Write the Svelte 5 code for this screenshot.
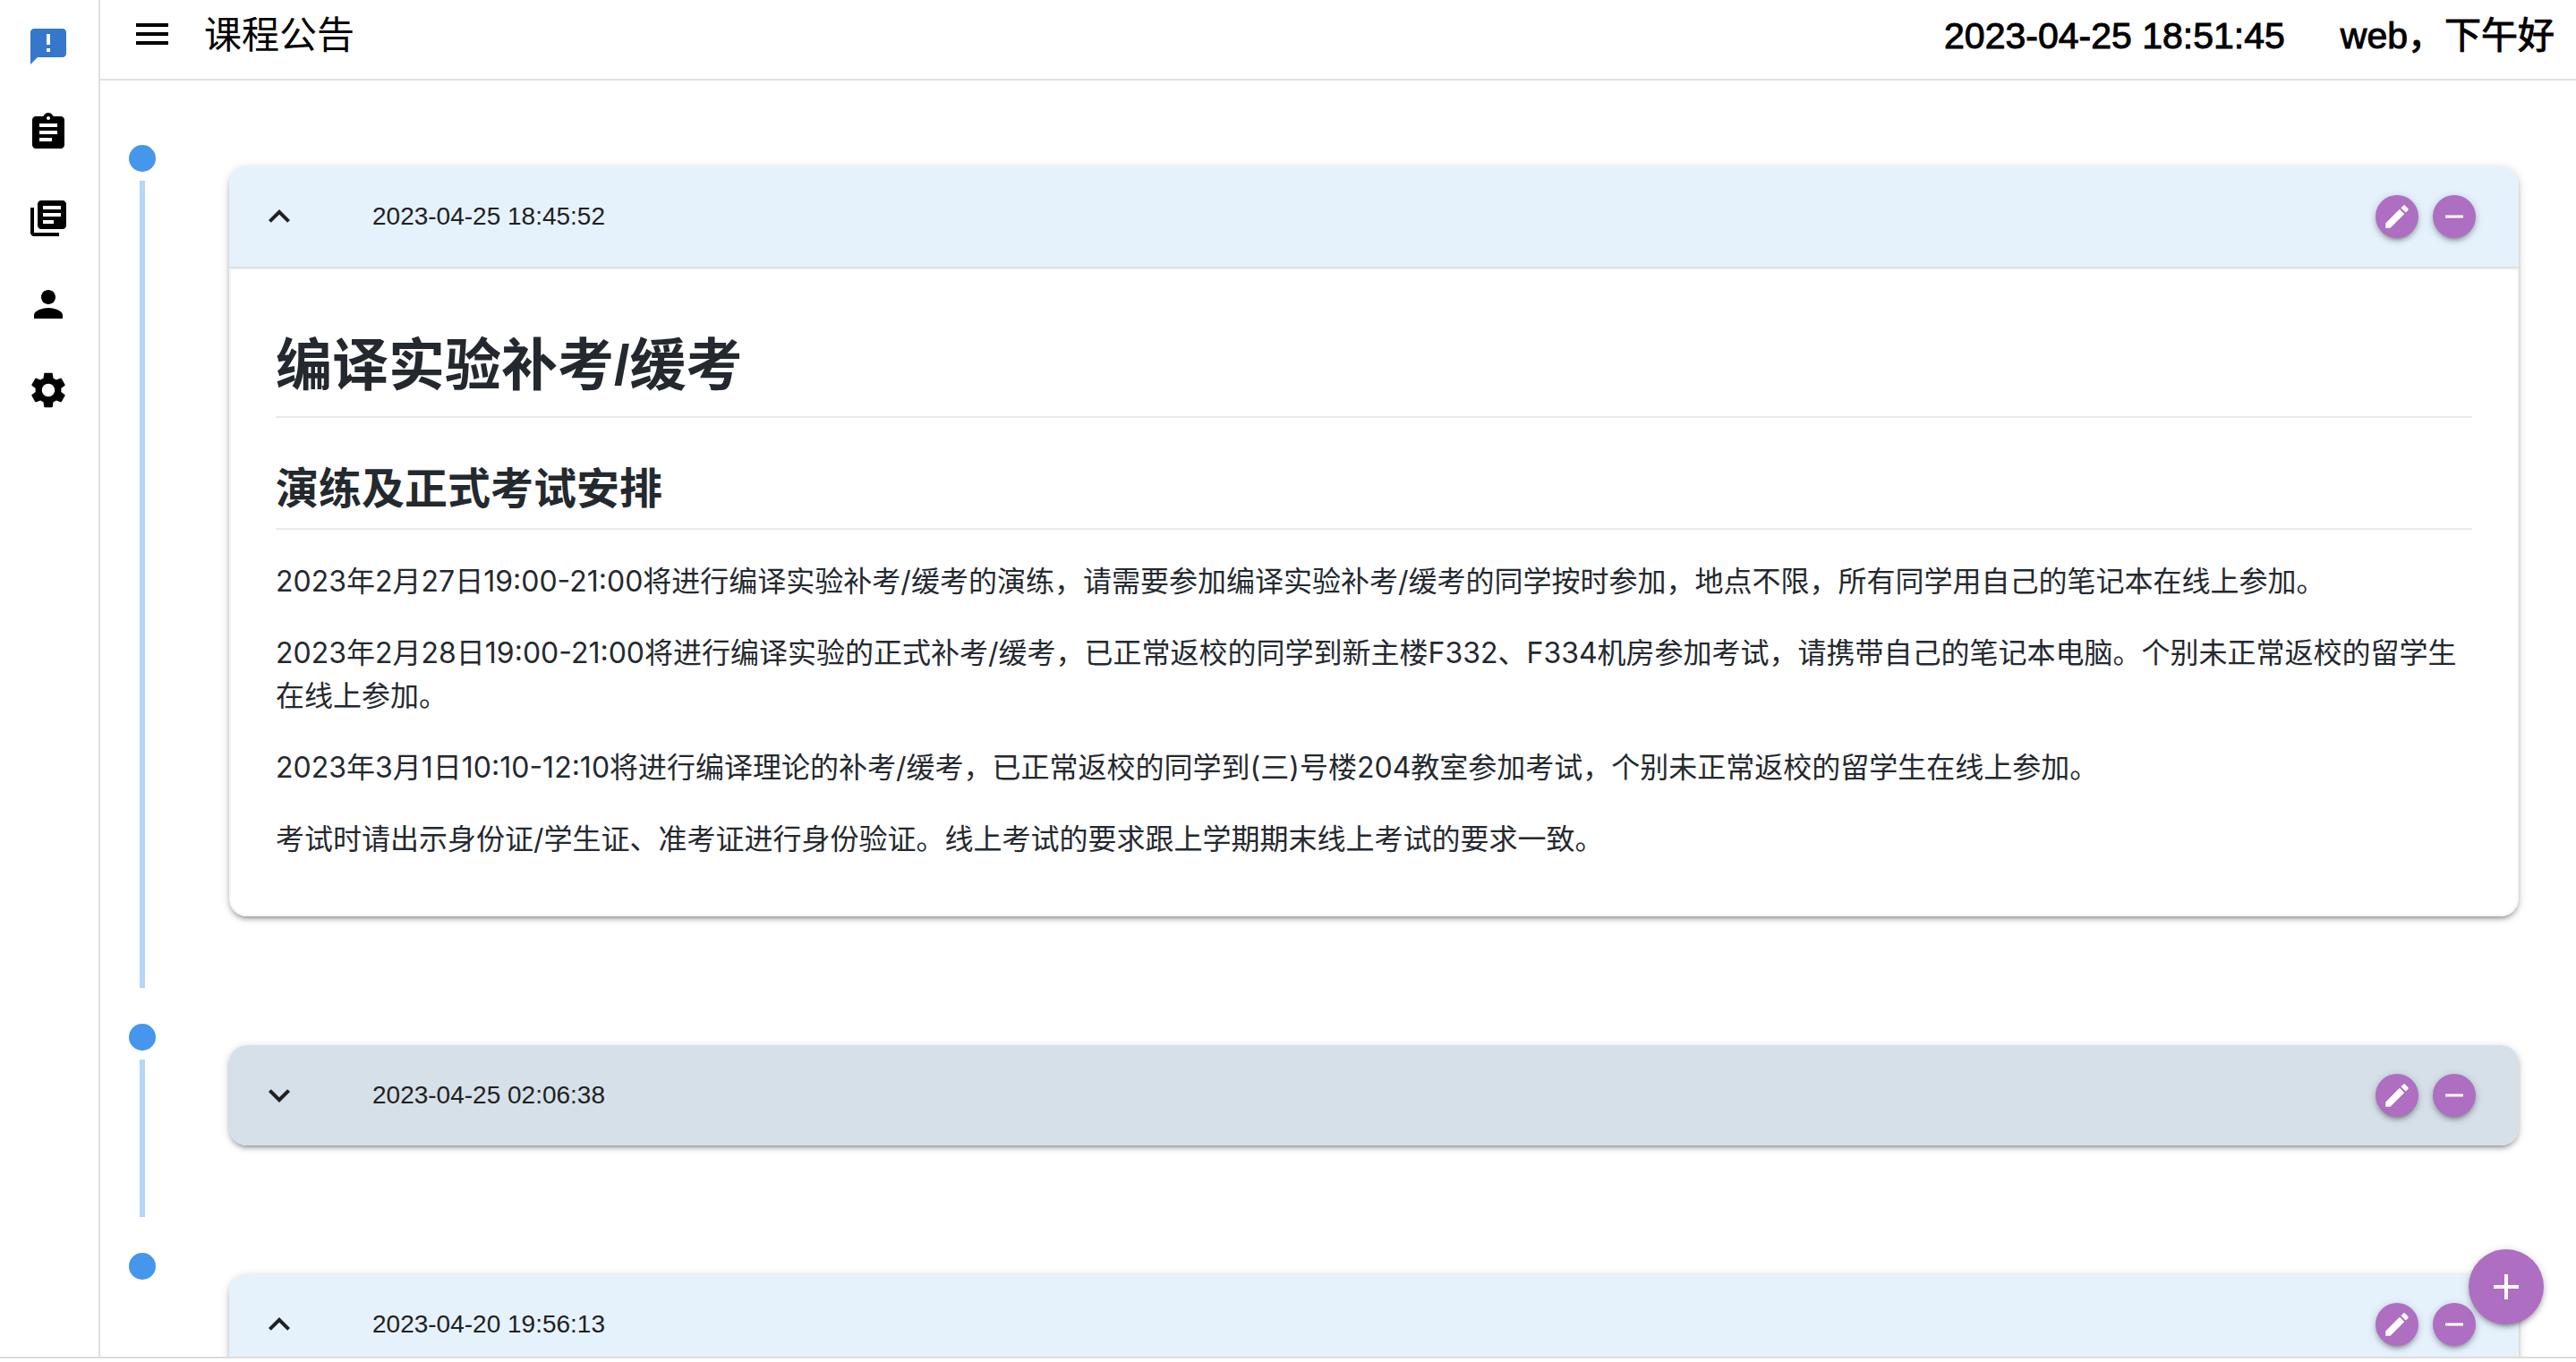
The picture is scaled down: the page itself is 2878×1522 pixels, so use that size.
<script lang="ts">
    type Notice = {
        time: string;
        open: boolean;
        hovered?: boolean;
        title?: string;
        subtitle?: string;
        paragraphs?: string[];
    };

    // Material icon paths, 24x24
    const icons = {
        announcement: 'M20 2H4c-1.1 0-1.99.9-1.99 2L2 22l4-4h14c1.1 0 2-.9 2-2V4c0-1.1-.9-2-2-2zm-7 9h-2V5h2v6zm0 4h-2v-2h2v2z',
        assignment: 'M19 3h-4.18C14.4 1.84 13.3 1 12 1c-1.3 0-2.4.84-2.82 2H5c-1.1 0-2 .9-2 2v14c0 1.1.9 2 2 2h14c1.1 0 2-.9 2-2V5c0-1.1-.9-2-2-2zm-7 0c.55 0 1 .45 1 1s-.45 1-1 1-1-.45-1-1 .45-1 1-1zm2 14H7v-2h7v2zm3-4H7v-2h10v2zm0-4H7V7h10v2z',
        library: 'M4 6H2v14c0 1.1.9 2 2 2h14v-2H4V6zm16-4H8c-1.1 0-2 .9-2 2v12c0 1.1.9 2 2 2h12c1.1 0 2-.9 2-2V4c0-1.1-.9-2-2-2zm-1 9H9V9h10v2zm-4 4H9v-2h6v2zm4-8H9V5h10v2z',
        person: 'M12 12c2.21 0 4-1.79 4-4s-1.79-4-4-4-4 1.79-4 4 1.79 4 4 4zm0 2c-2.67 0-8 1.34-8 4v2h16v-2c0-2.66-5.33-4-8-4z',
        settings: 'M19.14 12.94c.04-.3.06-.61.06-.94 0-.32-.02-.64-.07-.94l2.03-1.58c.18-.14.23-.41.12-.61l-1.92-3.32c-.12-.22-.37-.29-.59-.22l-2.39.96c-.5-.38-1.03-.7-1.62-.94l-.36-2.54c-.04-.24-.24-.41-.48-.41h-3.84c-.24 0-.43.17-.47.41l-.36 2.54c-.59.24-1.13.57-1.62.94l-2.39-.96c-.22-.08-.47 0-.59.22L2.74 8.87c-.12.21-.08.47.12.61l2.03 1.58c-.05.3-.09.63-.09.94s.02.64.07.94l-2.03 1.58c-.18.14-.23.41-.12.61l1.92 3.32c.12.22.37.29.59.22l2.39-.96c.5.38 1.03.7 1.62.94l.36 2.54c.05.24.24.41.48.41h3.84c.24 0 .44-.17.47-.41l.36-2.54c.59-.24 1.13-.56 1.62-.94l2.39.96c.22.08.47 0 .59-.22l1.92-3.32c.12-.22.07-.47-.12-.61l-2.01-1.58zM12 15.6c-1.98 0-3.6-1.62-3.6-3.6s1.62-3.6 3.6-3.6 3.6 1.62 3.6 3.6-1.62 3.6-3.6 3.6z',
        menu: 'M3 18h18v-2H3v2zm0-5h18v-2H3v2zm0-7v2h18V6H3z',
        up: 'M7.41 15.41L12 10.83l4.59 4.58L18 14l-6-6-6 6z',
        down: 'M7.41 8.59L12 13.17l4.59-4.58L18 10l-6 6-6-6z',
        edit: 'M3 17.25V21h3.75L17.81 9.94l-3.75-3.75L3 17.25zM20.71 7.04c.39-.39.39-1.02 0-1.41l-2.34-2.34c-.39-.39-1.02-.39-1.41 0l-1.83 1.83 3.75 3.75 1.83-1.83z',
        remove: 'M19 13H5v-2h14v2z',
        add: 'M19 13h-6v6h-2v-6H5v-2h6V5h2v6h6v2z'
    };

    const navItems = [
        { label: '课程公告', icon: icons.announcement, href: '#announcement' },
        { label: '作业', icon: icons.assignment, href: '#assignment' },
        { label: '资料', icon: icons.library, href: '#library' },
        { label: '用户', icon: icons.person, href: '#user' },
        { label: '设置', icon: icons.settings, href: '#settings' }
    ];

    let active = $state('#announcement');

    let notices: Notice[] = $state([
        {
            time: '2023-04-25 18:45:52',
            open: true,
            title: '编译实验补考/缓考',
            subtitle: '演练及正式考试安排',
            paragraphs: [
                '2023年2月27日19:00-21:00将进行编译实验补考/缓考的演练，请需要参加编译实验补考/缓考的同学按时参加，地点不限，所有同学用自己的笔记本在线上参加。',
                '2023年2月28日19:00-21:00将进行编译实验的正式补考/缓考，已正常返校的同学到新主楼F332、F334机房参加考试，请携带自己的笔记本电脑。个别未正常返校的留学生在线上参加。',
                '2023年3月1日10:10-12:10将进行编译理论的补考/缓考，已正常返校的同学到(三)号楼204教室参加考试，个别未正常返校的留学生在线上参加。',
                '考试时请出示身份证/学生证、准考证进行身份验证。线上考试的要求跟上学期期末线上考试的要求一致。'
            ]
        },
        { time: '2023-04-25 02:06:38', open: false, hovered: true },
        { time: '2023-04-20 19:56:13', open: true }
    ]);

    function removeNotice(index: number) {
        notices.splice(index, 1);
    }
</script>

{#snippet icon(path: string)}
    <svg viewBox="0 0 24 24" fill="currentColor" aria-hidden="true"><path d={path} /></svg>
{/snippet}

<div class="layout">
    <nav class="drawer">
        {#each navItems as item}
            <a
                href={item.href}
                class="nav-item"
                class:active={active === item.href}
                aria-label={item.label}
                onclick={() => (active = item.href)}
            >
                {@render icon(item.icon)}
            </a>
        {/each}
    </nav>

    <div class="page">
        <header class="toolbar">
            <button class="menu-btn" aria-label="菜单">{@render icon(icons.menu)}</button>
            <h1 class="toolbar-title">课程公告</h1>
            <time class="toolbar-text">2023-04-25 18:51:45</time>
            <span class="toolbar-text">web，下午好</span>
        </header>

        <main class="timeline">
            {#each notices as notice, index}
                <section class="entry">
                    <div class="rail">
                        <span class="dot"></span>
                        <span class="line"></span>
                    </div>
                    <article class="card">
                        <div class="card-header" class:hovered={notice.hovered}>
                            <button class="toggle" aria-expanded={notice.open} onclick={() => (notice.open = !notice.open)}>
                                {@render icon(notice.open ? icons.up : icons.down)}
                                <time>{notice.time}</time>
                            </button>
                            <button class="round-btn" aria-label="编辑">{@render icon(icons.edit)}</button>
                            <button class="round-btn" aria-label="删除" onclick={() => removeNotice(index)}>
                                {@render icon(icons.remove)}
                            </button>
                        </div>
                        {#if notice.open}
                            <div class="card-body">
                                {#if notice.title}
                                    <h1>{notice.title}</h1>
                                {/if}
                                {#if notice.subtitle}
                                    <h2>{notice.subtitle}</h2>
                                {/if}
                                {#each notice.paragraphs ?? [] as text}
                                    <p>{text}</p>
                                {/each}
                            </div>
                        {/if}
                    </article>
                </section>
            {/each}
        </main>
    </div>

    <button class="fab" aria-label="新增">{@render icon(icons.add)}</button>
</div>

<style>
    :global(body) {
        background: #fff;
    }

    .layout {
        position: relative;
        display: flex;
        box-sizing: border-box;
        height: calc(100vh - 4px);
        border-bottom: 2px solid #dcdcdc;
        overflow: hidden;
        color: #000;
        font-family: 'Liberation Sans', 'Noto Sans CJK SC', sans-serif;
    }

    button {
        padding: 0;
        border: none;
        background: none;
        color: inherit;
        font: inherit;
        cursor: pointer;
    }

    svg {
        display: block;
        flex: none;
        width: 48px;
        height: 48px;
    }

    .drawer {
        display: flex;
        flex-direction: column;
        gap: 48px;
        flex: none;
        padding: 28px 32px 0 30px;
        border-right: 2px solid #e0e0e0;
    }

    .nav-item {
        color: #000;
    }

    .nav-item.active {
        color: #3577cb;
    }

    .page {
        display: flex;
        flex-direction: column;
        flex: 1;
        min-width: 0;
    }

    .toolbar {
        display: flex;
        align-items: center;
        flex: none;
        height: 76px;
        padding: 0 24px 12px 34px;
        border-bottom: 2px solid #e0e0e0;
    }

    .toolbar-title,
    .toolbar-text {
        padding-top: 4px;
        font-weight: 400;
        line-height: 64px;
    }

    .toolbar-title {
        flex: 1;
        margin: 0 0 0 34px;
        font-size: 42px;
    }

    /* Between regular and bold */
    .toolbar-text {
        margin-left: 62px;
        font-size: 41px;
        -webkit-text-stroke: 1px currentColor;
    }

    .timeline {
        flex: 1;
        min-height: 0;
        padding: 72px 64px 0 32px;
        overflow-y: auto;
        scrollbar-width: none;
    }

    .entry {
        display: flex;
        gap: 82px;
    }

    .rail {
        display: flex;
        flex-direction: column;
        align-items: center;
        gap: 10px;
        flex: none;
        width: 30px;
    }

    .dot {
        width: 30px;
        height: 30px;
        border-radius: 50%;
        background: #4596ec;
    }

    .line {
        flex: 1;
        width: 6px;
        margin-bottom: 40px;
        background: #b4d5f7;
    }

    .entry:last-child .line {
        display: none;
    }

    .card {
        flex: 1;
        min-width: 0;
        margin: 24px 0 120px;
        border-radius: 20px;
        background: #fff;
        box-shadow:
            0 2px 10px rgba(0, 0, 0, 0.2),
            0 4px 4px rgba(0, 0, 0, 0.14),
            0 6px 2px -4px rgba(0, 0, 0, 0.12);
        overflow: hidden;
    }

    .card-header {
        display: flex;
        align-items: center;
        gap: 16px;
        height: 112px;
        padding: 0 48px 0 32px;
        background: #e5f2fc;
        color: #212121;
    }

    .card-header.hovered {
        background: #d6e0e8;
    }

    .toggle {
        display: flex;
        align-items: center;
        gap: 80px;
        flex: 1;
        height: 100%;
        font-size: 28px;
    }

    .round-btn,
    .fab {
        display: flex;
        align-items: center;
        justify-content: center;
        flex: none;
        width: 48px;
        height: 48px;
        border-radius: 50%;
        background: #ae6ec2;
        color: #fff;
        box-shadow:
            0 2px 10px rgba(0, 0, 0, 0.2),
            0 4px 4px rgba(0, 0, 0, 0.14),
            0 6px 2px -4px rgba(0, 0, 0, 0.12);
    }

    .round-btn svg {
        width: 34px;
        height: 34px;
    }

    /* Floats over the timeline */
    .fab {
        position: absolute;
        right: 36px;
        bottom: 36px;
        width: 84px;
        height: 84px;
    }

    .card-body {
        margin-top: 2px;
        padding: 66px 50px 60px;
        border: 2px solid #f1f7fd;
        border-radius: 0 0 20px 20px;
        box-shadow: 0 -2px 0 #e0e0e0;
        color: #24292f;
        font-family: Inter, 'Noto Sans CJK SC', sans-serif;
        font-size: 32px;
        line-height: 48px;
    }

    .card-body h1,
    .card-body h2 {
        border-bottom: 2px solid #e9eaef;
        font-family: 'Liberation Sans', 'Noto Sans CJK SC', sans-serif;
        font-weight: 600;
    }

    .card-body h1 {
        margin: 0 0 50px;
        padding-bottom: 17px;
        font-size: 63px;
        line-height: 80px;
    }

    .card-body h2 {
        margin: 0 0 34px;
        padding-bottom: 13px;
        font-size: 48px;
        line-height: 60px;
    }

    .card-body p {
        margin: 0 0 32px;
    }

    .card-body p:last-child {
        margin-bottom: 0;
    }
</style>
